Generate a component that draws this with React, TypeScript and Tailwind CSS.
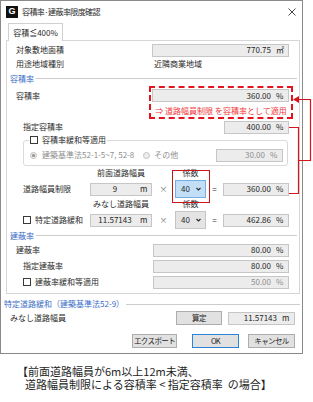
import React from "react";

type FieldProps = {
  className: string;
  value: string;
  unit?: string;
  center?: boolean;
  muted?: boolean;
};

const Field = ({ className, value, unit, center, muted }: FieldProps) => (
  <div
    className={`flex h-[13px] shrink-0 items-center border border-[#c6c6c6] bg-[#ececec] text-[8px] leading-none ${
      muted ? "text-[#8e8e8e]" : "text-[#262626]"
    } ${className}`}
  >
    <span className={`flex-1 ${center ? "pl-[2px] text-center" : "text-right"}`}>{value}</span>
    {unit && (
      <span className={center ? "w-[14px] shrink-0 pl-[3px]" : "w-[17px] shrink-0 pl-[5px]"}>{unit}</span>
    )}
  </div>
);

const Section = ({ label, className }: { label: string; className: string }) => (
  <div className={`flex items-center gap-[2px] text-[8px] text-[#3b6dc6] ${className}`}>
    <span>{label}</span>
    <div className="h-px flex-1 bg-[#cdcdcd]" />
  </div>
);

const Check = () => <span className="h-[8px] w-[8px] shrink-0 border border-[#3a3a3a] bg-white" />;

const Radio = ({ on }: { on?: boolean }) => (
  <span className="flex h-[7px] w-[7px] shrink-0 items-center justify-center rounded-full border border-[#c2c2c2] bg-[#ececec]">
    {on && <span className="h-[3px] w-[3px] rounded-full bg-[#8f8f8f]" />}
  </span>
);

const Combo = ({ active }: { active?: boolean }) => (
  <div
    className={`flex h-[18px] w-[31px] shrink-0 items-center border pl-[5px] pr-[4px] text-[8px] ${
      active ? "border-[#76aee0] bg-[#c3dff7]" : "border-[#c6c6c6] bg-[#e4e4e4]"
    }`}
  >
    <span className="flex-1">40</span>
    <svg width="5" height="4" viewBox="0 0 5 4">
      <path d="M0.5 1 L2.5 3 L4.5 1" stroke="#2a2a2a" fill="none" strokeWidth="1.1" />
    </svg>
  </div>
);

const Button = ({ label, className }: { label: string; className: string }) => (
  <div
    className={`flex h-[14px] items-center justify-center whitespace-nowrap border bg-[#e1e1e1] text-[7.5px] tracking-[-0.6px] text-[#222] ${className}`}
  >
    {label}
  </div>
);

const App: React.FC = () => {
  return (
    <div className="relative h-[402px] w-[313px] overflow-hidden bg-white font-['Noto_Sans_CJK_JP',sans-serif] text-[#2a2a2a]">
      <div className="flex h-[354px] w-[303px] flex-col border border-[#8a8a8a] bg-white">
        {/* title bar */}
        <div className="flex h-[21px] items-center">
          <div className="ml-[5px] flex h-[12px] w-[12px] items-center justify-center bg-[#111]">
            <span className="font-['Liberation_Sans',sans-serif] text-[9px] font-bold leading-none text-white">G</span>
          </div>
          <span className="ml-[4px] text-[8px] tracking-[-0.6px]">容積率·建蔽率限度確認</span>
          <svg className="ml-auto mr-[6px]" width="8" height="8" viewBox="0 0 8 8">
            <path d="M0.5 0.5 L7.5 7.5 M7.5 0.5 L0.5 7.5" stroke="#333" strokeWidth="0.9" />
          </svg>
        </div>

        {/* tab */}
        <div className="relative z-10 -mb-px ml-[7px] mt-[1px] flex h-[18px] w-[55px] items-center justify-center border border-b-0 border-[#d0d0d0] bg-white text-[8px]">
          容積≦400%
        </div>

        {/* tab panel */}
        <div className="ml-[5px] w-[294px] border border-[#d6d6d6] pb-[3px]">
          <div className="mt-[2px] flex h-[14px] items-center justify-between pl-[9px] pr-[10px] text-[8px]">
            <span>対象敷地面積</span>
            <Field className="w-[137px]" value="770.75" unit="㎡" />
          </div>
          <div className="flex h-[14px] items-center justify-between pl-[9px] pr-[10px] text-[8px]">
            <span>用途地域種別</span>
            <span className="w-[137px] pl-[2px]">近隣商業地域</span>
          </div>

          <Section label="容積率" className="h-[15px] pl-[3px] pr-[2px]" />

          <div className="flex pl-[9px] pr-[6px] text-[8px]">
            <span className="mt-[3px] h-[13px] leading-[13px]">容積率</span>
            <div className="ml-auto h-[33px] w-[144px] border-2 border-dashed border-[#e4141e]">
              <Field className="ml-[1px] mt-[1px] w-[137px]" value="360.00" unit="%" />
              <div className="mt-[3px] h-[12px] text-center text-[8px] leading-[12px] text-[#f0383c]">
                ⇒ 道路幅員制限 を容積率として適用
              </div>
            </div>
          </div>

          <div className="mt-[1px] flex h-[14px] items-center justify-between pl-[16px] pr-[10px] text-[8px]">
            <span>指定容積率</span>
            <Field className="w-[65px]" value="400.00" unit="%" />
          </div>

          <fieldset className="ml-[16px] mr-[11px] rounded-[3px] border border-[#dadada] pb-[3px] pl-[5px] pr-[4px]">
            <legend className="flex h-[12px] items-center gap-[4px] px-[1px] text-[8px]">
              <Check />
              <span>容積率緩和等適用</span>
            </legend>
            <div className="mt-[2px] flex h-[14px] items-center text-[8px] text-[#8e8e8e]">
              <span className="ml-[1px]">
                <Radio on />
              </span>
              <span className="ml-[5px]">建築基準法52-1-5~7, 52-8</span>
              <span className="ml-[9px]">
                <Radio />
              </span>
              <span className="ml-[4px]">その他</span>
              <Field className="ml-auto w-[67px]" value="30.00" unit="%" muted />
            </div>
          </fieldset>

          <div className="mt-[1px] flex h-[12px] items-center pl-[16px] text-[8px]">
            <span className="w-[67px]" />
            <span className="w-[62px] text-center">前面道路幅員</span>
            <span className="w-[23px]" />
            <span className="w-[31px] text-center">係数</span>
          </div>
          <div className="mt-[1px] flex h-[18px] items-center pl-[16px] text-[8px]">
            <span className="w-[67px]">道路幅員制限</span>
            <Field className="w-[62px]" value="9" unit="m" center />
            <span className="w-[23px] text-center text-[#777]">×</span>
            <Combo active />
            <span className="w-[17px] text-center">=</span>
            <Field className="w-[66px]" value="360.00" unit="%" />
          </div>
          <div className="flex h-[12px] items-center pl-[16px] text-[8px]">
            <span className="w-[67px]" />
            <span className="w-[62px] text-center">みなし道路幅員</span>
            <span className="w-[23px]" />
            <span className="w-[31px] text-center">係数</span>
          </div>
          <div className="mt-[1px] flex h-[18px] items-center pl-[16px] text-[8px]">
            <span className="flex w-[67px] items-center gap-[4px]">
              <Check />
              <span>特定道路緩和</span>
            </span>
            <Field className="w-[62px]" value="11.57143" unit="m" center />
            <span className="w-[23px] text-center text-[#777]">×</span>
            <Combo />
            <span className="w-[17px] text-center">=</span>
            <Field className="w-[66px]" value="462.86" unit="%" />
          </div>

          <Section label="建蔽率" className="h-[13px] pl-[3px] pr-[2px]" />

          <div className="flex h-[16px] items-center justify-between pl-[9px] pr-[10px] text-[8px]">
            <span>建蔽率</span>
            <Field className="w-[136px]" value="80.00" unit="%" />
          </div>
          <div className="flex h-[16px] items-center justify-between pl-[16px] pr-[10px] text-[8px]">
            <span>指定建蔽率</span>
            <Field className="w-[136px]" value="80.00" unit="%" />
          </div>
          <div className="flex h-[16px] items-center justify-between pl-[16px] pr-[10px] text-[8px]">
            <span className="flex items-center gap-[4px]">
              <Check />
              <span>建蔽率緩和等適用</span>
            </span>
            <Field className="w-[136px]" value="50.00" unit="%" muted />
          </div>
        </div>

        <Section label="特定道路緩和（建築基準法52-9）" className="mt-[3px] h-[14px] pl-[3px] pr-[2px]" />
        <div className="flex h-[14px] items-center pl-[9px] pr-[7px] text-[8px]">
          <span>みなし道路幅員</span>
          <Button label="算定" className="ml-auto h-[13px] w-[46px] border-[#adadad]" />
          <Field className="ml-[6px] w-[67px]" value="11.57143" unit="m" />
        </div>
        <div className="mt-[9px] flex items-center justify-end pr-[7px]">
          <Button label="エクスポート" className="w-[45px] border-[#adadad]" />
          <Button label="OK" className="ml-[15px] w-[47px] border-[#2a84d8]" />
          <Button label="キャンセル" className="ml-[9px] w-[47px] border-[#adadad]" />
        </div>
      </div>

      <div className="mt-[11px] text-[11px] leading-[13px] text-[#1e1e1e]">
        <div className="pl-[17px]">【前面道路幅員が6m以上12m未満、</div>
        <div className="pl-[25px]">道路幅員制限による容積率 &lt; 指定容積率&nbsp;&nbsp;の場合】</div>
      </div>

      {/* annotations */}
      <div className="pointer-events-none absolute left-[172px] top-[170px] h-[33px] w-[38px] border border-[#c8161d]" />
      <svg className="pointer-events-none absolute left-0 top-0" width="313" height="402" viewBox="0 0 313 402">
        <g stroke="#d6141c" strokeWidth="1.2" fill="none">
          <path d="M289 127.5 H298.5 V193.5 H289" />
          <path d="M298.5 160.5 H310.5 V99.5 H297" />
        </g>
        <path d="M293 99.5 L299 96 L299 103 Z" fill="#d6141c" />
      </svg>
    </div>
  );
};

export default App;
